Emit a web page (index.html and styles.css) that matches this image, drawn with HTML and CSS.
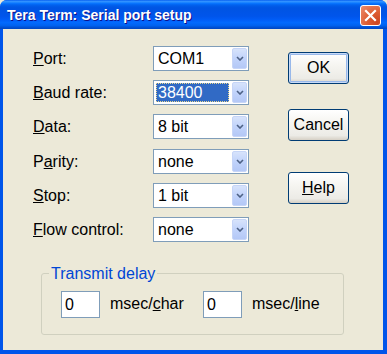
FILE: index.html
```html
<!DOCTYPE html>
<html>
<head>
<meta charset="utf-8">
<link rel="stylesheet" href="styles.css">
</head>
<body>
<div class="window">
  <div class="titlebar">
    <span class="title">Tera Term: Serial port setup</span>
    <div class="close">
      <svg width="13" height="13" viewBox="0 0 13 13"><path d="M2 2 L11 11 M11 2 L2 11" stroke="#fff" stroke-width="2.2" stroke-linecap="square"/></svg>
    </div>
  </div>
  <div class="body">
    <div class="top">
      <div class="form">
        <span class="label"><u>P</u>ort:</span>
        <div class="combo"><span class="val">COM1</span><span class="arrow"><svg width="8" height="5" viewBox="0 0 8 5"><path d="M1 1 L4 4 L7 1" fill="none" stroke="#4D6185" stroke-width="1.6"/></svg></span></div>
        <span class="label"><u>B</u>aud rate:</span>
        <div class="combo"><span class="val sel">38400</span><span class="arrow"><svg width="8" height="5" viewBox="0 0 8 5"><path d="M1 1 L4 4 L7 1" fill="none" stroke="#4D6185" stroke-width="1.6"/></svg></span></div>
        <span class="label"><u>D</u>ata:</span>
        <div class="combo"><span class="val">8 bit</span><span class="arrow"><svg width="8" height="5" viewBox="0 0 8 5"><path d="M1 1 L4 4 L7 1" fill="none" stroke="#4D6185" stroke-width="1.6"/></svg></span></div>
        <span class="label">P<u>a</u>rity:</span>
        <div class="combo"><span class="val">none</span><span class="arrow"><svg width="8" height="5" viewBox="0 0 8 5"><path d="M1 1 L4 4 L7 1" fill="none" stroke="#4D6185" stroke-width="1.6"/></svg></span></div>
        <span class="label"><u>S</u>top:</span>
        <div class="combo"><span class="val">1 bit</span><span class="arrow"><svg width="8" height="5" viewBox="0 0 8 5"><path d="M1 1 L4 4 L7 1" fill="none" stroke="#4D6185" stroke-width="1.6"/></svg></span></div>
        <span class="label"><u>F</u>low control:</span>
        <div class="combo"><span class="val">none</span><span class="arrow"><svg width="8" height="5" viewBox="0 0 8 5"><path d="M1 1 L4 4 L7 1" fill="none" stroke="#4D6185" stroke-width="1.6"/></svg></span></div>
      </div>
      <div class="buttons">
        <div class="btn default">OK</div>
        <div class="btn cancel">Cancel</div>
        <div class="btn help"><u>H</u>elp</div>
      </div>
    </div>
    <fieldset class="group">
      <legend>Transmit delay</legend>
      <div class="delay">
        <div class="field">0</div>
        <span class="unit">msec/<u>c</u>har</span>
        <div class="field">0</div>
        <span class="unit">msec/<u>l</u>ine</span>
      </div>
    </fieldset>
  </div>
</div>
</body>
</html>
```
FILE: styles.css
```css
html, body {
  margin: 0;
  padding: 0;
  background: #ECE9D8;
}
.window {
  width: 387px;
  height: 354px;
  box-sizing: border-box;
  display: flex;
  flex-direction: column;
  background: #0055EA;
  border-radius: 7px 7px 0 0;
  overflow: hidden;
  font-family: "Liberation Sans", Arial, sans-serif;
  font-size: 16px;
  color: #000;
}
.titlebar {
  height: 29px;
  flex: none;
  display: flex;
  align-items: center;
  background: linear-gradient(180deg, #0058EE 0%, #3593FF 4%, #288EFF 7%, #127DFF 10%, #036FFC 13%, #0262EE 17%, #0057E5 24%, #0054E3 30%, #0055EB 56%, #005BF5 66%, #026AFE 78%, #0062EF 88%, #0052D6 94%, #0046C0 100%);
}
.title {
  flex: 1;
  padding-left: 7px;
  padding-top: 1px;
  color: #fff;
  font-weight: bold;
  font-size: 14px;
  text-shadow: 1px 1px #0F1089;
}
.close {
  width: 19px;
  height: 19px;
  margin-right: 6px;
  margin-top: 2px;
  border: 1px solid #fff;
  border-radius: 3px;
  display: flex;
  align-items: center;
  justify-content: center;
  background: radial-gradient(circle at 85% 85%, #CC4622 0%, #DE5E33 45%, #EC8D6E 100%);
}
.body {
  flex: 1;
  margin: 0 4px 4px 3px;
  background: #ECE9D8;
  padding: 17px 0 0 30px;
}
.top {
  display: flex;
}
.form {
  display: grid;
  grid-template-columns: 120px 96px;
  grid-auto-rows: 25px;
  row-gap: 9.2px;
  align-items: center;
}
.label {
  line-height: 25px;
  white-space: nowrap;
}
.combo {
  height: 25px;
  box-sizing: border-box;
  border: 1px solid #7F9DB9;
  background: #fff;
  display: flex;
  align-items: stretch;
  padding: 1px;
}
.val {
  flex: 1;
  padding-left: 3px;
  line-height: 21px;
  margin-right: 3px;
}
.val.sel {
  background: #316AC5;
  color: #fff;
  outline: 1px dotted #E8D890;
  outline-offset: -1px;
  margin: 1px 3px 1px 1px;
  padding-left: 2px;
  line-height: 19px;
}
.arrow {
  width: 15px;
  box-sizing: border-box;
  border: 1px solid #C6D5F7;
  border-radius: 2px;
  background: linear-gradient(180deg, #D7E3FB 0%, #C1D3FB 50%, #B4C8F6 100%);
  display: flex;
  align-items: center;
  justify-content: center;
}
.buttons {
  margin-left: 39px;
  margin-top: 6px;
  display: flex;
  flex-direction: column;
}
.btn {
  width: 61px;
  height: 32px;
  box-sizing: border-box;
  border: 1px solid #003C74;
  border-radius: 3px;
  background: linear-gradient(180deg, #FFFFFF 0%, #F6F5F1 40%, #ECEBE6 85%, #D6D0C5 100%);
  display: flex;
  align-items: center;
  justify-content: center;
}
.btn.default {
  box-shadow: inset 0 0 0 1px #C8DAF7, inset 0 0 0 2px #98B8EA;
}
.btn.cancel {
  margin-top: 25px;
}
.btn.help {
  margin-top: 31px;
}
.group {
  margin: 24px 0 0 8px;
  width: 303px;
  height: 69px;
  box-sizing: border-box;
  border: 1px solid #D0D0BF;
  border-radius: 3px;
  padding: 0 0 0 19px;
}
.group legend {
  color: #0046D5;
  line-height: 16px;
  padding: 0 2px;
  margin-left: -12px;
}
.delay {
  display: grid;
  grid-template-columns: 39px 103px 39px auto;
  align-items: center;
  margin-top: 9px;
}
.field {
  height: 27px;
  box-sizing: border-box;
  border: 1px solid #7F9DB9;
  background: #fff;
  padding-left: 3px;
  line-height: 25px;
}
.unit {
  padding-left: 10px;
  white-space: nowrap;
}
```
